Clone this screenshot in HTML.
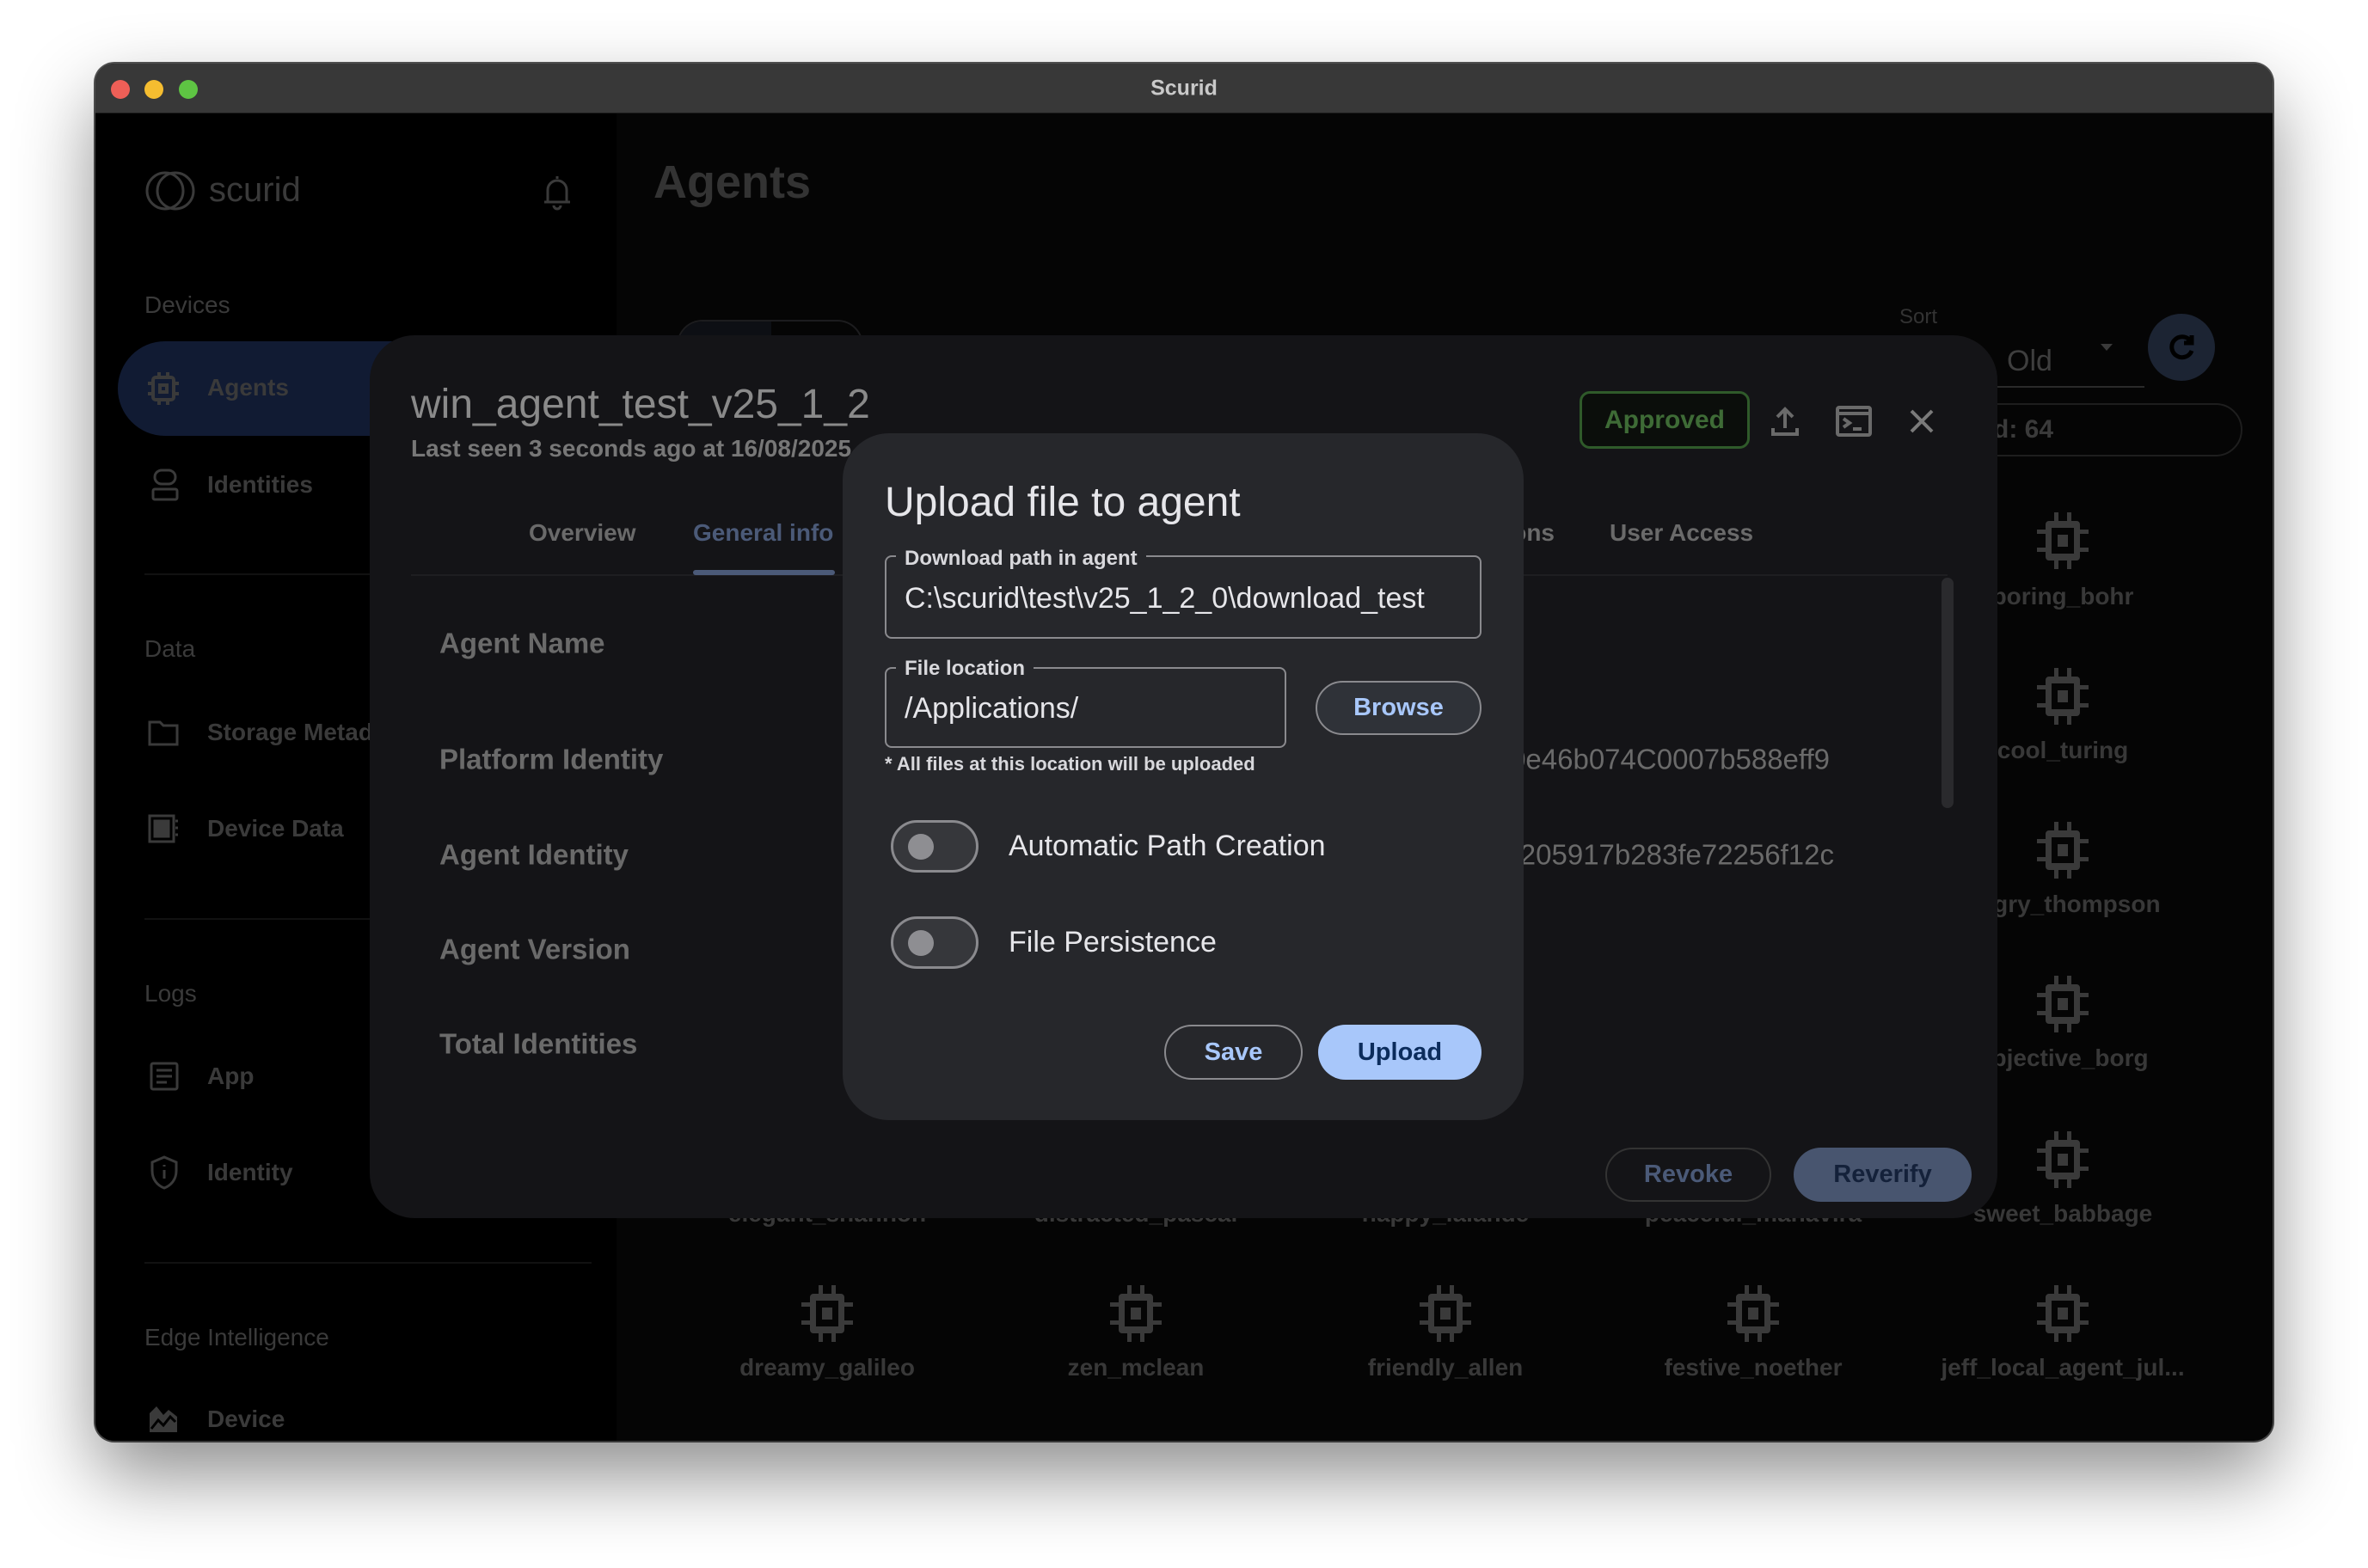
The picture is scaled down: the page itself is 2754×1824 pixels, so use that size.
<!DOCTYPE html>
<html><head><meta charset="utf-8"><style>
*{margin:0;padding:0;box-sizing:border-box}
body{width:2754px;height:1824px;background:#fff;position:relative;overflow:hidden;font-family:"Liberation Sans",sans-serif}
.a{position:absolute}
.t{position:absolute;line-height:1;transform:translateY(-50%);white-space:nowrap}
.win{left:111px;top:74px;width:2532px;height:1602px;border-radius:22px;background:#050505;overflow:hidden;box-shadow:0 40px 90px rgba(0,0,0,.45),0 0 0 2px #555}
.dot{width:22px;height:22px;border-radius:50%;top:93px}
.sl{color:#3a3a3a;font-size:28px}
.ni{color:#3a3a3a;font-size:28px;font-weight:bold}
.hr{height:2px;background:#111}
.chip{width:60px;height:66px}
.lbl{color:#383838;font-size:28px;font-weight:bold;transform:translate(-50%,-50%)}
.rowl{color:#6a6a6a;font-size:33px;font-weight:bold}
.fld{border:2px solid #8a8a8e;border-radius:8px}
.flab{background:#26272b;padding:0 10px;color:#d8d8dc;font-size:24px;font-weight:bold}
.tog{width:102px;height:61px;border:3px solid #8a8a8e;border-radius:31px;background:#36373b}
.tog i{position:absolute;left:17px;top:13px;width:30px;height:30px;border-radius:50%;background:#8e8e92}
.btn{border-radius:34px;font-weight:bold;font-size:29px;display:flex;align-items:center;justify-content:center}
</style></head><body>
<div class="a win">
 <div class="a" style="left:0;top:0;width:100%;height:58px;background:#383838;border-bottom:1px solid #1a1a1a"></div>
 <div class="a" style="left:0;top:58px;width:606px;height:1544px;background:#000"></div>
</div>
<div class="a dot" style="left:129px;background:#ee5f57"></div>
<div class="a dot" style="left:168px;background:#f5bd30"></div>
<div class="a dot" style="left:208px;background:#5ec443"></div>
<div class="t" style="left:111px;width:2532px;text-align:center;top:103px;color:#c9c9c9;font-size:25px;font-weight:bold">Scurid</div>

<!-- sidebar -->
<svg class="a" style="left:166px;top:199px" width="64" height="46" viewBox="0 0 64 46" fill="none" stroke="#3a3a3a" stroke-width="3"><ellipse cx="26" cy="23" rx="21" ry="21"/><ellipse cx="38" cy="23" rx="21" ry="21"/></svg>
<div class="t" style="left:243px;top:221px;color:#3a3a3a;font-size:40px">scurid</div>
<svg class="a" style="left:631px;top:201px" width="34" height="44" viewBox="0 0 34 44" fill="none" stroke="#3a3a3a" stroke-width="3"><path d="M17 4v3M6 34V20a11 11 0 0 1 22 0v14h4H2h4M13 38a4 4 0 0 0 8 0"/></svg>
<div class="t sl" style="left:168px;top:355px">Devices</div>
<div class="a" style="left:137px;top:397px;width:600px;height:110px;border-radius:55px;background:#111b33"></div>
<svg class="a" style="left:171px;top:432px" width="38" height="40" viewBox="0 0 38 40" fill="none" stroke="#3a3a3a" stroke-width="4"><rect x="7" y="7" width="24" height="26" rx="3"/><rect x="15" y="16" width="8" height="8"/><path d="M14 1v6M24 1v6M14 33v6M24 33v6M1 14h6M1 26h6M31 14h6M31 26h6"/></svg>
<div class="t ni" style="left:241px;top:451px">Agents</div>
<svg class="a" style="left:176px;top:544px" width="32" height="40" viewBox="0 0 32 40" fill="none" stroke="#3a3a3a" stroke-width="3"><rect x="4" y="3" width="24" height="16" rx="8"/><rect x="2" y="25" width="28" height="12" rx="2"/></svg>
<div class="t ni" style="left:241px;top:564px">Identities</div>
<div class="a hr" style="left:168px;top:667px;width:520px"></div>
<div class="t sl" style="left:168px;top:755px">Data</div>
<svg class="a" style="left:172px;top:836px" width="36" height="32" viewBox="0 0 36 32" fill="none" stroke="#3a3a3a" stroke-width="3"><path d="M2 4h12l4 4h16v22H2z"/></svg>
<div class="t ni" style="left:241px;top:852px">Storage Metadata</div>
<svg class="a" style="left:172px;top:947px" width="36" height="34" viewBox="0 0 36 34" fill="none" stroke="#3a3a3a" stroke-width="3"><rect x="2" y="2" width="28" height="30"/><rect x="8" y="8" width="8" height="8" fill="#3a3a3a"/><rect x="18" y="8" width="6" height="8" fill="#3a3a3a"/><rect x="8" y="18" width="16" height="8" fill="#3a3a3a"/><path d="M32 8h3M32 16h3M32 24h3"/></svg>
<div class="t ni" style="left:241px;top:964px">Device Data</div>
<div class="a hr" style="left:168px;top:1068px;width:520px"></div>
<div class="t sl" style="left:168px;top:1156px">Logs</div>
<svg class="a" style="left:174px;top:1235px" width="34" height="34" viewBox="0 0 34 34" fill="none" stroke="#3a3a3a" stroke-width="3"><rect x="2" y="2" width="30" height="30" rx="2"/><path d="M8 10h18M8 17h18M8 24h12"/></svg>
<div class="t ni" style="left:241px;top:1252px">App</div>
<svg class="a" style="left:174px;top:1344px" width="34" height="40" viewBox="0 0 34 40" fill="none" stroke="#3a3a3a" stroke-width="3"><path d="M17 2L3 8v10c0 10 6 17 14 20 8-3 14-10 14-20V8z"/><path d="M17 17v10M17 11v2"/></svg>
<div class="t ni" style="left:241px;top:1364px">Identity</div>
<div class="a hr" style="left:168px;top:1468px;width:520px"></div>
<div class="t sl" style="left:168px;top:1556px">Edge Intelligence</div>
<svg class="a" style="left:172px;top:1634px" width="36" height="34" viewBox="0 0 36 34"><path d="M2 32V10l8-8 8 10 6-6 10 8v18z" fill="#3a3a3a"/><path d="M4 28l8-10 6 6 8-10 6 6" stroke="#000" stroke-width="3" fill="none"/></svg>
<div class="t ni" style="left:241px;top:1651px">Device</div>

<!-- main -->
<div class="t" style="left:760px;top:212px;color:#333;font-size:54px;font-weight:bold">Agents</div>
<div class="a" style="left:787px;top:372px;width:217px;height:40px;border:2px solid #1c1c1e;border-bottom:none;border-radius:30px 30px 0 0;overflow:hidden"><div style="width:108px;height:100%;background:#0d0f14"></div></div>
<div class="t" style="left:2209px;top:369px;color:#333;font-size:24px">Sort</div>
<div class="t" style="left:2334px;top:420px;color:#3e3e3e;font-size:34px">Old</div>
<div class="a" style="left:2443px;top:400px;border:7px solid transparent;border-top:8px solid #3a3a3a"></div>
<div class="a" style="left:2300px;top:449px;width:194px;height:2px;background:#2a2a2a"></div>
<div class="a" style="left:2498px;top:365px;width:78px;height:78px;border-radius:50%;background:#1c2433"></div>
<svg class="a" style="left:2519px;top:386px" width="36" height="36" viewBox="0 0 36 36" fill="none" stroke="#000" stroke-width="5"><path d="M28 10a12 12 0 1 0 2 12"/><path d="M30 4v9h-9" fill="#000"/></svg>
<div class="a" style="left:2210px;top:469px;width:398px;height:62px;border:2px solid #1e1e1e;border-radius:31px"></div>
<div class="t" style="left:2318px;top:500px;color:#3a3a3a;font-size:30px;font-weight:bold">d: 64</div>

<svg width="0" height="0" style="position:absolute"><defs><symbol id="c" viewBox="0 0 60 66"><path d="M20 0h5v10h10V0h5v10h6a4 4 0 0 1 4 4v6h10v5H50v16h10v5H50v6a4 4 0 0 1-4 4h-6v10h-5V56H25v10h-5V56h-6a4 4 0 0 1-4-4v-6H0v-5h10V25H0v-5h10v-6a4 4 0 0 1 4-4h6zM17 18v30h26V18zM24 26h12v14H24z" fill="#3a3a3a" fill-rule="evenodd"/></symbol></defs></svg>
<svg class="a chip" style="left:2369px;top:596px"><use href="#c"/></svg><div class="t lbl" style="left:2399px;top:694px">boring_bohr</div>
<svg class="a chip" style="left:2369px;top:777px"><use href="#c"/></svg><div class="t lbl" style="left:2399px;top:873px">cool_turing</div>
<svg class="a chip" style="left:2369px;top:956px"><use href="#c"/></svg><div class="t lbl" style="left:2399px;top:1052px">angry_thompson</div>
<svg class="a chip" style="left:2369px;top:1135px"><use href="#c"/></svg><div class="t lbl" style="left:2399px;top:1231px">objective_borg</div>
<svg class="a chip" style="left:2369px;top:1316px"><use href="#c"/></svg><div class="t lbl" style="left:2399px;top:1412px">sweet_babbage</div>
<div class="t lbl" style="left:962px;top:1412px">elegant_shannon</div>
<div class="t lbl" style="left:1321px;top:1412px">distracted_pascal</div>
<div class="t lbl" style="left:1681px;top:1412px">happy_lalande</div>
<div class="t lbl" style="left:2039px;top:1412px">peaceful_mahavira</div>
<svg class="a chip" style="left:932px;top:1495px"><use href="#c"/></svg><div class="t lbl" style="left:962px;top:1591px">dreamy_galileo</div>
<svg class="a chip" style="left:1291px;top:1495px"><use href="#c"/></svg><div class="t lbl" style="left:1321px;top:1591px">zen_mclean</div>
<svg class="a chip" style="left:1651px;top:1495px"><use href="#c"/></svg><div class="t lbl" style="left:1681px;top:1591px">friendly_allen</div>
<svg class="a chip" style="left:2009px;top:1495px"><use href="#c"/></svg><div class="t lbl" style="left:2039px;top:1591px">festive_noether</div>
<svg class="a chip" style="left:2369px;top:1495px"><use href="#c"/></svg><div class="t lbl" style="left:2399px;top:1591px">jeff_local_agent_jul...</div>

<!-- agent modal -->
<div class="a" style="left:430px;top:390px;width:1893px;height:1027px;background:#141417;border-radius:52px"></div>
<div class="t" style="left:478px;top:471px;color:#8a8a8a;font-size:48px">win_agent_test_v25_1_2</div>
<div class="t" style="left:478px;top:522px;color:#777;font-size:28px;font-weight:bold">Last seen 3 seconds ago at 16/08/2025</div>
<div class="a" style="left:1837px;top:455px;width:198px;height:67px;border:3px solid #2f5a2a;border-radius:12px;background:#0b0e0b;color:#3e6b36;font-size:30px;font-weight:bold;display:flex;align-items:center;justify-content:center">Approved</div>
<svg class="a" style="left:2059px;top:472px" width="34" height="36" viewBox="0 0 34 36" fill="none" stroke="#6a6a6a" stroke-width="4"><path d="M17 26V4M8 13l9-9 9 9M3 26v7h28v-7"/></svg>
<svg class="a" style="left:2135px;top:472px" width="42" height="36" viewBox="0 0 42 36" fill="none" stroke="#6a6a6a" stroke-width="4"><rect x="2" y="2" width="38" height="32" rx="2"/><path d="M2 9h38M9 15l7 5-7 5M20 27h10"/></svg>
<svg class="a" style="left:2220px;top:475px" width="30" height="30" viewBox="0 0 30 30" stroke="#7a7a7a" stroke-width="4"><path d="M3 3l24 24M27 3L3 27"/></svg>
<div class="t" style="left:615px;top:620px;color:#6a6a6a;font-size:28px;font-weight:bold">Overview</div>
<div class="t" style="left:806px;top:620px;color:#4b5a78;font-size:28px;font-weight:bold">General info</div>
<div class="t" style="left:1808px;top:620px;color:#6a6a6a;font-size:28px;font-weight:bold;transform:translate(-100%,-50%)">Permissions</div>
<div class="t" style="left:1872px;top:620px;color:#6a6a6a;font-size:28px;font-weight:bold">User Access</div>
<div class="a" style="left:478px;top:668px;width:1787px;height:2px;background:#1e1e21"></div>
<div class="a" style="left:806px;top:663px;width:165px;height:6px;background:#4b5a78;border-radius:3px"></div>
<div class="a" style="left:2258px;top:672px;width:14px;height:268px;background:#2a2a2d;border-radius:7px"></div>
<div class="t rowl" style="left:511px;top:748px">Agent Name</div>
<div class="t rowl" style="left:511px;top:883px">Platform Identity</div>
<div class="t rowl" style="left:511px;top:994px">Agent Identity</div>
<div class="t rowl" style="left:511px;top:1104px">Agent Version</div>
<div class="t rowl" style="left:511px;top:1214px">Total Identities</div>
<div class="t" style="left:2128px;top:883px;color:#6a6a6a;font-size:33px;transform:translate(-100%,-50%)">0x5a1f0e46b074C0007b588eff9</div>
<div class="t" style="left:2133px;top:994px;color:#6a6a6a;font-size:33px;transform:translate(-100%,-50%)">0xa9c3b205917b283fe72256f12c</div>
<div class="a btn" style="left:1867px;top:1335px;width:193px;height:63px;border:2px solid #333;color:#4b5a78">Revoke</div>
<div class="a btn" style="left:2086px;top:1335px;width:207px;height:63px;background:#48556f;color:#14213a">Reverify</div>

<!-- upload dialog -->
<div class="a" style="left:980px;top:504px;width:792px;height:799px;background:#26272b;border-radius:54px"></div>
<div class="t" style="left:1029px;top:585px;color:#e6e6ea;font-size:48px">Upload file to agent</div>
<div class="a fld" style="left:1029px;top:646px;width:694px;height:97px"></div>
<div class="t flab" style="left:1042px;top:650px">Download path in agent</div>
<div class="t" style="left:1052px;top:696px;color:#e6e6ea;font-size:34px">C:\scurid\test\v25_1_2_0\download_test</div>
<div class="a fld" style="left:1029px;top:776px;width:467px;height:94px"></div>
<div class="t flab" style="left:1042px;top:778px">File location</div>
<div class="t" style="left:1052px;top:824px;color:#e6e6ea;font-size:34px">/Applications/</div>
<div class="a btn" style="left:1530px;top:792px;width:193px;height:63px;border:2px solid #8a8a8e;background:#2f3238;color:#a8c7fa">Browse</div>
<div class="t" style="left:1029px;top:889px;color:#d8d8dc;font-size:22px;font-weight:bold">* All files at this location will be uploaded</div>
<div class="a tog" style="left:1036px;top:954px"><i></i></div>
<div class="t" style="left:1173px;top:984px;color:#e6e6ea;font-size:34px">Automatic Path Creation</div>
<div class="a tog" style="left:1036px;top:1066px"><i></i></div>
<div class="t" style="left:1173px;top:1096px;color:#e6e6ea;font-size:34px">File Persistence</div>
<div class="a btn" style="left:1354px;top:1192px;width:161px;height:64px;border:2px solid #8a8a8e;color:#a8c7fa">Save</div>
<div class="a btn" style="left:1533px;top:1192px;width:190px;height:64px;background:#a8c7fa;color:#0b2c5c">Upload</div>
</body></html>
